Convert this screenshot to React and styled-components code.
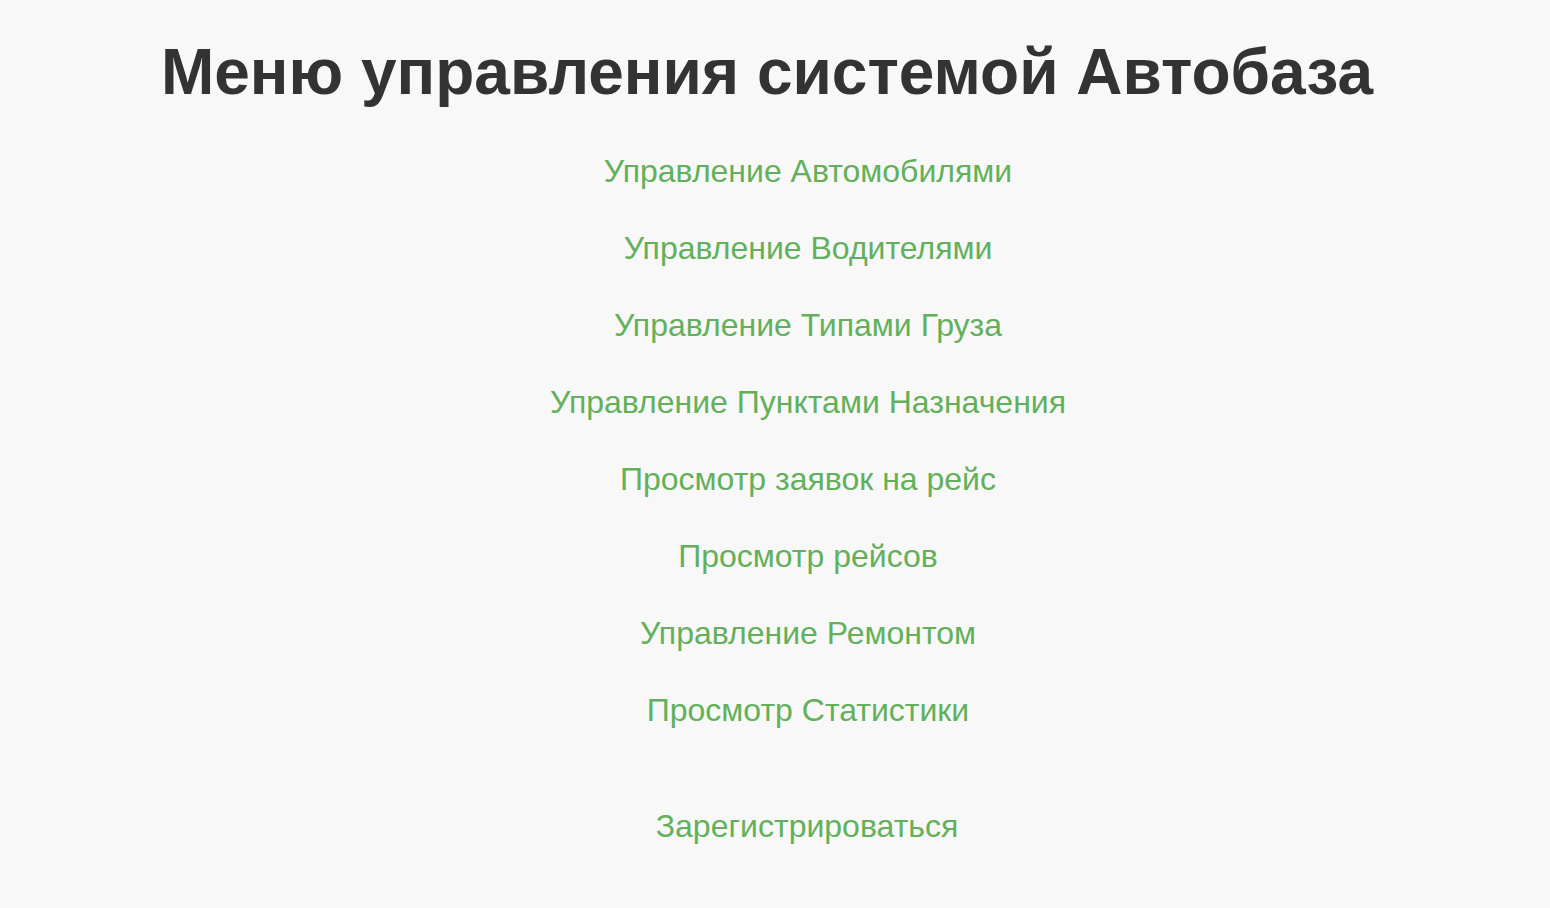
import React from 'react';
import styled, { createGlobalStyle } from 'styled-components';

const GlobalStyle = createGlobalStyle`
  body {
    margin: 0;
    background: #f8f8f8;
    font-family: "Liberation Sans", Arial, sans-serif;
  }
`;

const Page = styled.div`
  display: flex;
  flex-direction: column;
  align-items: center;
  padding-top: 34px;
`;

const Title = styled.h1`
  margin: 0 0 0 -16px;
  font-size: 64px;
  font-weight: bold;
  color: #333;
  line-height: 1.2;
`;

const Menu = styled.ul`
  list-style: none;
  margin: 42px 0 0;
  padding: 0 0 0 66px;
  display: flex;
  flex-direction: column;
  align-items: center;
  gap: 40px;
`;

const Item = styled.li`
  font-size: 32px;
  line-height: 37px;
`;

const Link = styled.a`
  color: #62b05a;
  font-size: 32px;
  line-height: 37px;
  text-decoration: none;
`;

const Register = styled(Link)`
  display: block;
  margin: 79px 0 0 64px;
`;

const links = [
  'Управление Автомобилями',
  'Управление Водителями',
  'Управление Типами Груза',
  'Управление Пунктами Назначения',
  'Просмотр заявок на рейс',
  'Просмотр рейсов',
  'Управление Ремонтом',
  'Просмотр Статистики',
];

const App = () => (
  <>
    <GlobalStyle />
    <Page>
      <Title>Меню управления системой Автобаза</Title>
      <Menu>
        {links.map(text => (
          <Item key={text}>
            <Link href="#">{text}</Link>
          </Item>
        ))}
      </Menu>
      <Register href="#">Зарегистрироваться</Register>
    </Page>
  </>
);

export default App;
